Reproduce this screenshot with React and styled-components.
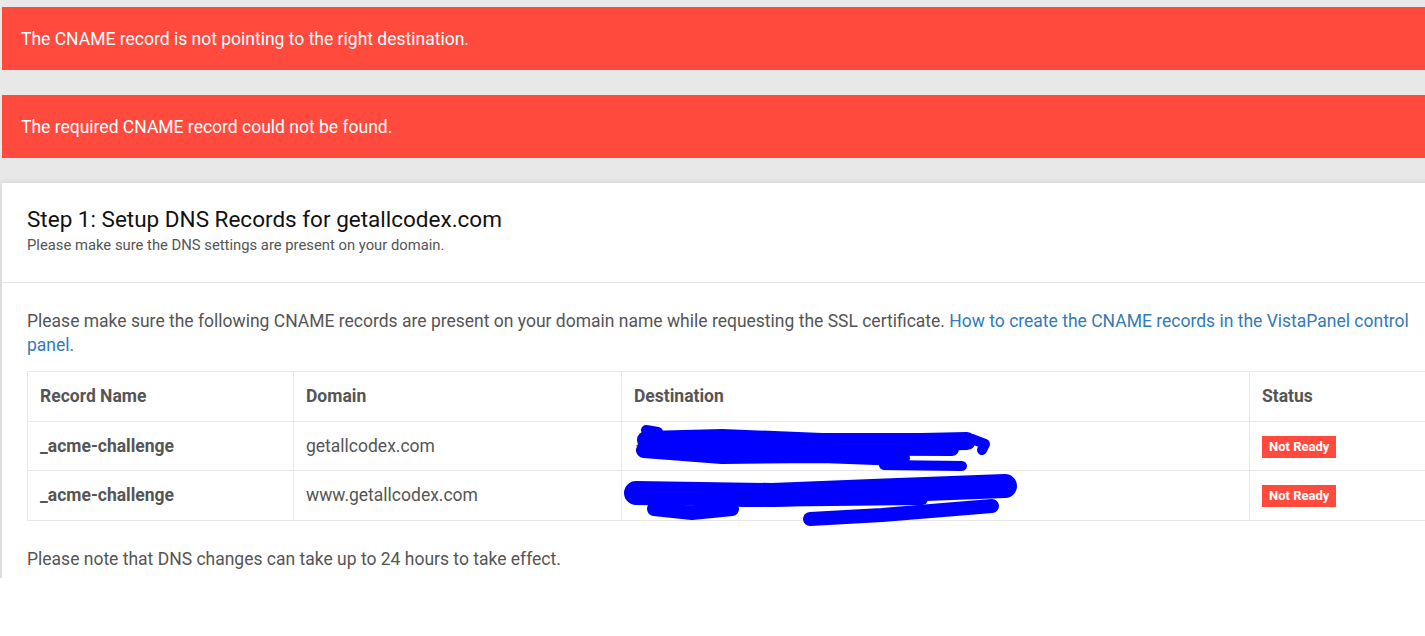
import styled, { createGlobalStyle } from 'styled-components';

const GlobalStyle = createGlobalStyle`
  html, body {
    margin: 0;
    padding: 0;
    background: #fff;
  }
  body {
    font-family: Roboto, "Noto Sans", "Liberation Sans", sans-serif;
  }
`

const Page = styled.div`
  height: 578px;
  overflow: hidden;
  background: #e8e8e8;
  padding: 7px 0 0 2px;
  box-sizing: border-box;
`

const Column = styled.div`
  width: 1475px;
  display: flex;
  flex-direction: column;
  gap: 25px;
`

const Alert = styled.div`
  background: #ff4a3d;
  color: #fff;
  font-size: 17.5px;
  line-height: 23px;
  padding: 21px 19px 19px;
`

const Card = styled.div`
  background: #fff;
  box-shadow: 0 0 6px rgba(0, 0, 0, 0.12);
  min-height: 500px;
`

const CardHeader = styled.div`
  padding: 23px 25px 27px;
  border-bottom: 1px solid #e6e6e6;
`

const Title = styled.h3`
  margin: 0;
  font-size: 22.5px;
  line-height: 26px;
  font-weight: 400;
  color: #111;
`

const Subtitle = styled.p`
  margin: 3px 0 0;
  font-size: 14.8px;
  line-height: 20px;
  color: #555;
`

const CardBody = styled.div`
  padding: 26px 25px;
  color: #555;
  font-size: 17.5px;
  line-height: 24px;
`

const Text = styled.p`
  margin: ${p => p.$top || 0}px 0 0;
`

const Link = styled.a`
  color: #337ab7;
  text-decoration: none;
`

const Table = styled.table`
  width: 100%;
  margin-top: 14px;
  border-collapse: collapse;
  table-layout: fixed;
`

const Cell = styled.td`
  border: 1px solid #e8e8e8;
  padding: 12px 12px;
  line-height: 24.5px;
  font-weight: ${p => (p.$bold ? 700 : 400)};
  color: #555;
  position: relative;
  white-space: nowrap;
`

const HeadCell = styled(Cell).attrs({ as: 'th' })`
  text-align: left;
  font-weight: 700;
`

const Badge = styled.span`
  display: inline-block;
  background: #ff4a3d;
  color: #fff;
  font-size: 13px;
  font-weight: 700;
  line-height: 22px;
  padding: 0 7px;
  vertical-align: middle;
`

const Scribble = styled.svg`
  position: absolute;
  left: 0;
  top: 0;
  overflow: visible;
`

const Redact1 = () => (
  <Scribble width="400" height="50">
    <text x="13" y="31" fill="#555" fontSize="17">a</text>
    <g fill="none" stroke="#0000ff" strokeLinecap="round" strokeLinejoin="round">
      <path d="M24 18 L100 16 L200 20 L300 20 L345 19" strokeWidth="18" />
      <path d="M60 26 L330 27" strokeWidth="14" />
      <path d="M22 28 L100 34 L200 33 L280 36" strokeWidth="16" />
      <path d="M24 8 L36 10" strokeWidth="10" />
      <path d="M330 22 L350 17 L363 22 L360 28" strokeWidth="10" />
      <path d="M262 43 L340 44" strokeWidth="10" />
    </g>
  </Scribble>
)

const Redact2 = () => (
  <Scribble width="400" height="50">
    <g fill="none" stroke="#0000ff" strokeLinecap="round" strokeLinejoin="round">
      <path d="M14 22 L150 24 L250 20 L383 15" strokeWidth="24" />
      <path d="M120 30 L300 28" strokeWidth="12" />
      <path d="M32 38 L70 42 L110 38" strokeWidth="14" />
      <path d="M188 48 L260 44 L370 35" strokeWidth="14" />
    </g>
  </Scribble>
)

const rows = [
  { name: '_acme-challenge', domain: 'getallcodex.com', Redact: Redact1 },
  { name: '_acme-challenge', domain: 'www.getallcodex.com', Redact: Redact2 },
]

const App = () => {
  return (
    <>
      <GlobalStyle />
      <Page>
        <Column>
          <Alert>The CNAME record is not pointing to the right destination.</Alert>
          <Alert>The required CNAME record could not be found.</Alert>
          <Card>
            <CardHeader>
              <Title>Step 1: Setup DNS Records for getallcodex.com</Title>
              <Subtitle>Please make sure the DNS settings are present on your domain.</Subtitle>
            </CardHeader>
            <CardBody>
              <Text>
                Please make sure the following CNAME records are present on your domain name while requesting the SSL certificate.{' '}
                <Link href="#">How to create the CNAME records in the VistaPanel control panel.</Link>
              </Text>
              <Table>
                <colgroup>
                  <col style={{ width: 266 }} />
                  <col style={{ width: 328 }} />
                  <col style={{ width: 628 }} />
                  <col />
                </colgroup>
                <thead>
                  <tr>
                    <HeadCell>Record Name</HeadCell>
                    <HeadCell>Domain</HeadCell>
                    <HeadCell>Destination</HeadCell>
                    <HeadCell>Status</HeadCell>
                  </tr>
                </thead>
                <tbody>
                  {rows.map(({ name, domain, Redact }) => (
                    <tr key={domain}>
                      <Cell $bold>{name}</Cell>
                      <Cell>{domain}</Cell>
                      <Cell><Redact /></Cell>
                      <Cell><Badge>Not Ready</Badge></Cell>
                    </tr>
                  ))}
                </tbody>
              </Table>
              <Text $top={26}>Please note that DNS changes can take up to 24 hours to take effect.</Text>
            </CardBody>
          </Card>
        </Column>
      </Page>
    </>
  );
}

export default App;
